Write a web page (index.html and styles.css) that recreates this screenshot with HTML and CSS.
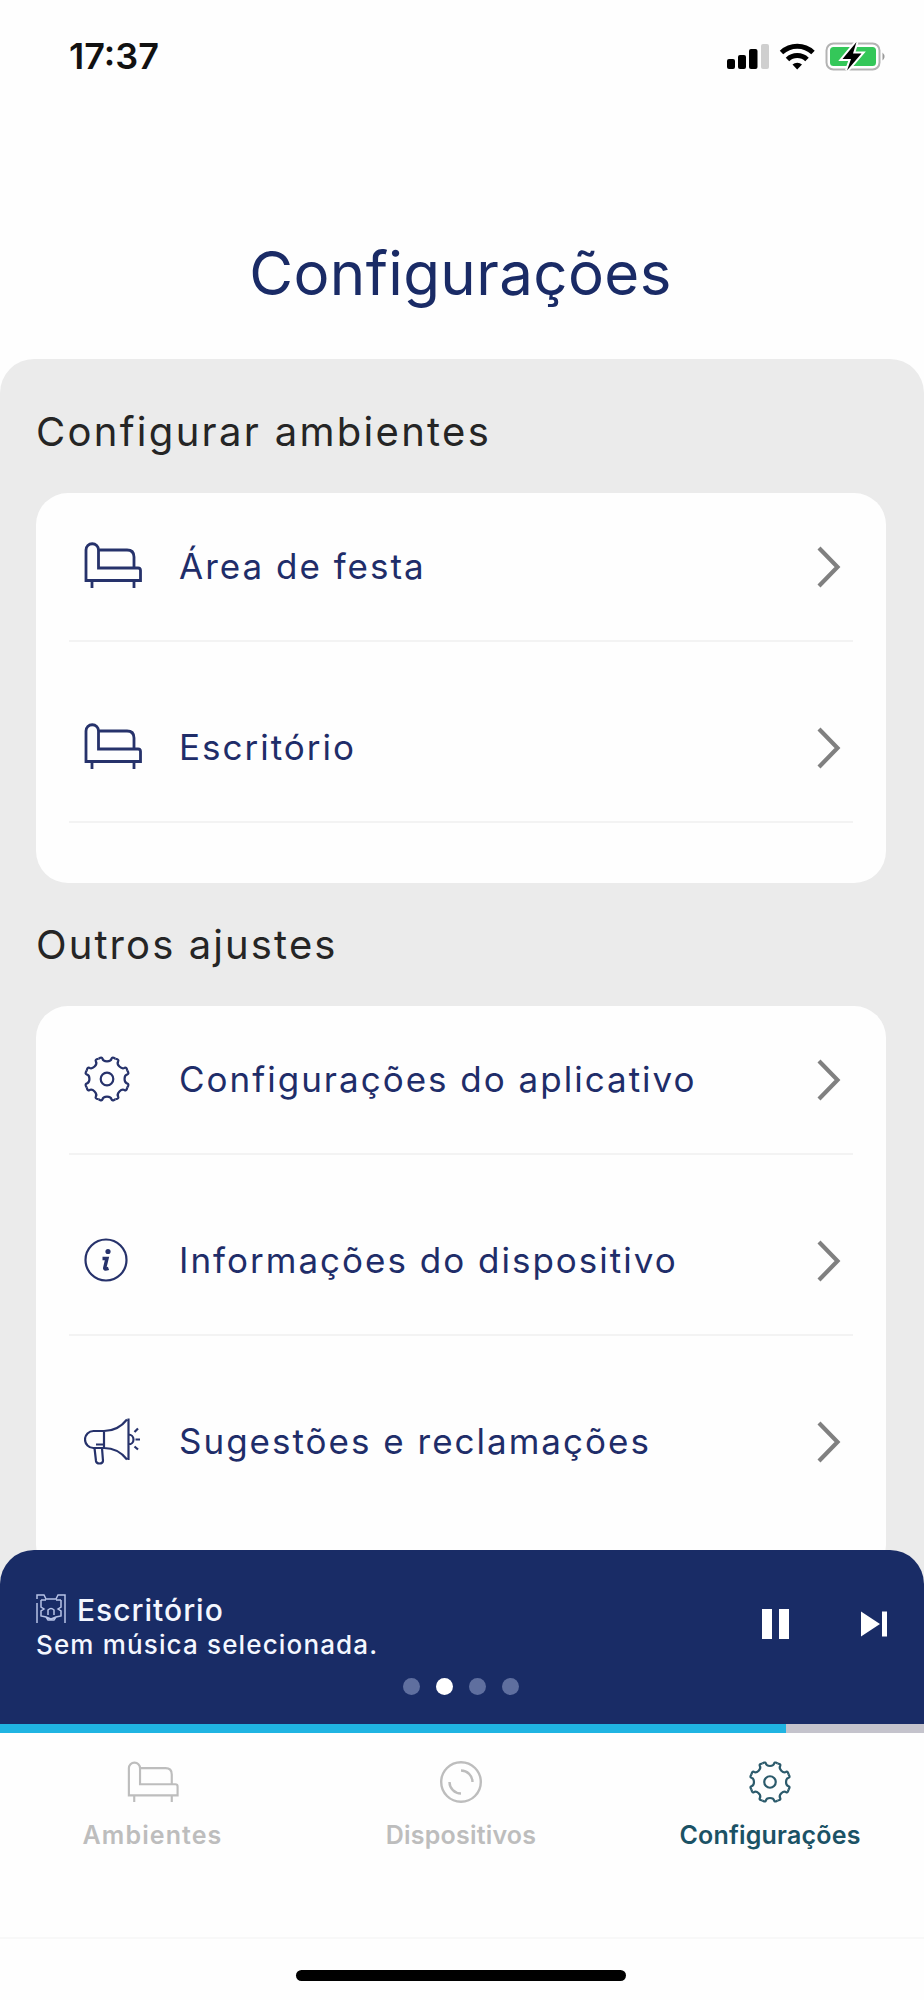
FILE: index.html
```html
<!DOCTYPE html>
<html lang="pt-br">
<head>
    <meta charset="UTF-8">
    <meta name="viewport" content="width=device-width, initial-scale=1.0">
    <title>Configurações</title>
    <link rel="stylesheet" href="styles.css">
</head>
<body>
    <!-- Ícones reutilizados -->
    <svg class="sprite">
        <symbol id="sofa" viewBox="0 0 58 47">
            <path d="M2 38.5V8a6.2 6.2 0 0 1 12.5 0V26H54q2.5 0 2.5 2.5v10zM14.5 8H43q7 0 7 7v11M8 38.5v7.5M50 38.5v7.5"/>
        </symbol>
        <symbol id="engrenagem" viewBox="-23 -23 46 46">
            <g id="dente2"><g id="dente"><path id="d" d="M-8.4-20.3L-6.7-21.2Q-5-21.8-4.6-20.4C-3.8-16.6 3.8-16.6 4.6-20.4Q5-21.8 6.7-21.2L8.4-20.3"/>
            <use href="#d" transform="rotate(45)"/></g>
            <use href="#dente" transform="rotate(90)"/></g>
            <use href="#dente2" transform="rotate(180)"/>
            <circle r="6.3"/>
        </symbol>
        <symbol id="seta" viewBox="0 0 24 42">
            <path d="M2 2l18.5 19L2 40"/>
        </symbol>
    </svg>

    <div class="tela">
        <div class="status">
            <span class="hora">17:37</span>
            <svg class="status-icones" width="160" height="32" viewBox="0 0 160 32">
                <rect x="0" y="18" width="8" height="10" rx="2"/>
                <rect x="11" y="14" width="8" height="14" rx="2"/>
                <rect x="22" y="8" width="8.500" height="20" rx="2"/>
                <rect x="34" y="3" width="8" height="25" rx="2" fill="#cfcfcf"/>
                <g fill="none" stroke="#000" stroke-width="5">
                    <path d="M54.500 11.500a23 23 0 0 1 31.500 0"/>
                    <path d="M60.500 18.500a14 14 0 0 1 19.500 0"/>
                </g>
                <path d="M65.500 23.500a7 7 0 0 1 9.500 0L70.200 28.500z"/>
                <rect x="99.500" y="2.500" width="53" height="26" rx="7" fill="#fff" stroke="#b3b3b3" stroke-width="2"/>
                <rect x="103" y="6" width="46" height="19" rx="3.500" fill="#34c759"/>
                <path d="M155.500 11.500q4 4 0 8z" fill="#999"/>
                <path d="M129.500 1L115.500 18h8.500l-4 11.500L134.500 12.500H126z" stroke="#fff" stroke-width="4" paint-order="stroke"/>
            </svg>
        </div>

        <h1>Configurações</h1>

        <div class="painel">
            <h2>Configurar ambientes</h2>
            <div class="cartao">
                <div class="linha">
                    <div class="icone"><svg class="sofa"><use href="#sofa"/></svg></div>
                    <span>Área de festa</span>
                    <svg class="seta"><use href="#seta"/></svg>
                </div>
                <div class="linha">
                    <div class="icone"><svg class="sofa"><use href="#sofa"/></svg></div>
                    <span>Escritório</span>
                    <svg class="seta"><use href="#seta"/></svg>
                </div>
            </div>

            <h2 class="outros">Outros ajustes</h2>
            <div class="cartao">
                <div class="linha">
                    <div class="icone"><svg class="engrenagem"><use href="#engrenagem"/></svg></div>
                    <span>Configurações do aplicativo</span>
                    <svg class="seta"><use href="#seta"/></svg>
                </div>
                <div class="linha">
                    <div class="icone">
                        <svg class="info" viewBox="0 0 44 44">
                            <circle cx="22" cy="22" r="20.500"/>
                            <circle class="cheio" cx="24" cy="13.500" r="2.600"/>
                            <path class="haste" d="M18.500 20.500h4.500l-2.300 9.500q-.3 1.800 3.800.3"/>
                        </svg>
                    </div>
                    <span>Informações do dispositivo</span>
                    <svg class="seta"><use href="#seta"/></svg>
                </div>
                <div class="linha ultima">
                    <div class="icone">
                        <svg class="megafone" viewBox="0 0 58 48">
                            <path d="M20 14H9.500a8.500 8.500 0 0 0 0 17H20zM20 14q14 0 23-11.500M20 31q14 0 23 11.500M44.500 1.500v41.500M44.500 17.500a5 5 0 0 1 0 10M10.500 31l1.500 13q.4 2.500 3.500 2.500t3.500-2.500l-1-13M12 27.500h8"/>
                            <path d="M50.500 15l3.500-3.500M51.500 22.500h4.500M50.500 29.500l3.500 3"/>
                        </svg>
                    </div>
                    <span>Sugestões e reclamações</span>
                    <svg class="seta"><use href="#seta"/></svg>
                </div>
            </div>
        </div>

        <div class="player">
            <div class="player-topo">
                <div class="faixa">
                    <div class="ambiente">
                        <svg width="30" height="30" viewBox="0 0 30 30">
                            <path d="M1 5V1h7l2 4h10l2-4h7v28M1 9v20M5 6h5M20 6h5M5 6v7l3 2-3 2v5l5 1 2 3h6l2-3 5-1v-5l-3-2 3-2V6M12 21v-5q3-3 6 0v5M10 23l5 2 5-2"/>
                        </svg>
                        <span>Escritório</span>
                    </div>
                    <div class="musica">Sem música selecionada.</div>
                </div>
                <svg class="controles" width="126" height="32" viewBox="0 0 126 32">
                    <path d="M1 1h10v30H1zM18 1h10v30H18zM100 3.500l19 12.500-19 12.500zM121 3.500h5v25h-5z"/>
                </svg>
            </div>
            <div class="pontos">
                <i></i><i class="ativo"></i><i></i><i></i>
            </div>
        </div>
        <div class="progresso"><div></div></div>

        <div class="menu">
            <div class="aba ambientes">
                <svg class="sofa"><use href="#sofa"/></svg>
                <span>Ambientes</span>
            </div>
            <div class="aba">
                <svg class="disco" viewBox="0 0 42 42">
                    <circle cx="21" cy="21" r="19.800"/>
                    <path d="M21 9.500a11.500 11.500 0 0 1 11.500 11.500M21 32.500a11.500 11.500 0 0 1-11.500-11.500"/>
                </svg>
                <span>Dispositivos</span>
            </div>
            <div class="aba atual">
                <svg class="engrenagem"><use href="#engrenagem"/></svg>
                <span>Configurações</span>
            </div>
        </div>
        <div class="rodape"><div class="barra"></div></div>
    </div>
</body>
</html>
```
FILE: styles.css
```css
* {
    box-sizing: border-box;
}

body {
    margin: 0;
    font-family: Inter, "Open Sans", sans-serif;
    background-color: #fefefe;
}

svg {
    display: block;
    flex: none;
}

.sprite {
    display: none;
}

.tela {
    width: 924px;
    height: 2000px;
    display: flex;
    flex-direction: column;
    overflow: hidden;
}

.status {
    height: 112px;
    flex: none;
    padding: 0 37px 0 69px;
    display: flex;
    align-items: center;
    justify-content: space-between;
}

.hora {
    font-size: 36px;
    font-weight: 600;
    color: #111;
}

.status-icones {
    margin-top: 1px;
}

h1 {
    margin: 0;
    height: 247px;
    flex: none;
    padding: 125px 3px 0 0;
    font-size: 60px;
    line-height: 73px;
    font-weight: 400;
    text-align: center;
    letter-spacing: 0.4px;
    color: #1a2b66;
}

/* Área cinza com os cartões */
.painel {
    height: 1225px;
    flex: none;
    padding: 0 38px 0 36px;
    background-color: #ebebeb;
    border-radius: 34px 34px 0 0;
    overflow: hidden;
}

h2 {
    margin: 0;
    height: 134px;
    padding-top: 49px;
    font-size: 40px;
    line-height: 48px;
    font-weight: 400;
    letter-spacing: 2.3px;
    color: #252525;
}

h2.outros {
    height: 123px;
    padding-top: 38px;
    letter-spacing: 2.1px;
}

.cartao {
    background-color: #fefefe;
    border-radius: 32px;
    padding: 0 33px 60px;
}

.linha {
    height: 149px;
    padding: 0 12px 0 15px;
    display: flex;
    align-items: center;
    border-bottom: 2px solid #f3f3f3;
    font-size: 35px;
    letter-spacing: 2px;
    color: #1f2d69;
}

.linha + .linha {
    height: 181px;
    padding-top: 32px;
}

.linha.ultima {
    border-bottom-color: transparent;
}

.icone {
    width: 95px;
    margin-bottom: 2px;
}

.linha span {
    flex: 1;
    margin-bottom: 2px;
}

.linha .icone svg {
    fill: none;
    stroke: #26326b;
    stroke-width: 2.8;
}

.sofa {
    width: 58px;
    height: 47px;
}

.engrenagem {
    width: 46px;
    height: 46px;
}

.linha .icone .engrenagem,
.linha .icone .info,
.linha .icone .megafone {
    stroke-width: 2.2;
}

.info {
    width: 44px;
    height: 44px;
}

.linha .info .cheio {
    fill: #26326b;
    stroke: none;
}

.info .haste {
    stroke-width: 3.4;
}

.megafone {
    width: 58px;
    height: 48px;
}

.seta {
    width: 24px;
    height: 42px;
    fill: none;
    stroke: #808080;
    stroke-width: 4.2;
}

/* Player por cima do fim da lista */
.player {
    height: 174px;
    flex: none;
    margin-top: -34px;
    padding: 41px 37px 0 36px;
    background-color: #192c66;
    border-radius: 34px 34px 0 0;
    color: #f4f7ff;
    font-weight: 500;
}

.player-topo {
    height: 87px;
    display: flex;
    justify-content: space-between;
}

.ambiente {
    height: 38px;
    display: flex;
    align-items: center;
    gap: 11px;
    font-size: 30px;
    letter-spacing: 1px;
}

.ambiente svg {
    margin-bottom: 3px;
    fill: none;
    stroke: #b6c2e6;
    stroke-width: 1.5;
}

.musica {
    font-size: 26px;
    line-height: 32px;
    letter-spacing: 1.15px;
}

.controles {
    margin-top: 17px;
    fill: #fff;
}

.pontos {
    display: flex;
    justify-content: center;
    gap: 16px;
    padding-right: 2px;
}

.pontos i {
    width: 17px;
    height: 17px;
    border-radius: 50%;
    background-color: #5f6f9f;
}

.pontos .ativo {
    background-color: #fff;
}

.progresso {
    height: 9px;
    flex: none;
    background-color: #c4c3cc;
}

.progresso div {
    width: 786px;
    height: 9px;
    background-color: #1fb4e2;
}

.menu {
    height: 206px;
    flex: none;
    padding-top: 28px;
    display: flex;
    justify-content: space-between;
    border-bottom: 2px solid #f8f8f8;
}

.aba {
    width: 308px;
    padding-right: 2px;
    display: flex;
    flex-direction: column;
    align-items: center;
    gap: 16px;
    font-size: 25px;
    line-height: 32px;
    font-weight: 600;
    letter-spacing: 0.2px;
    color: #bdbdbd;
}

.aba.ambientes {
    padding-right: 3px;
    letter-spacing: 1.1px;
}

.aba.atual {
    padding-right: 0;
    color: #1b5265;
}

.aba svg {
    height: 42px;
    fill: none;
    stroke: #bdbdbd;
    stroke-width: 2.4;
}

.aba .sofa {
    width: 52px;
}

.disco {
    width: 42px;
}

.aba .engrenagem {
    width: 42px;
    stroke: #2b5a6b;
}

.rodape {
    height: 61px;
    flex: none;
    padding: 31px 2px 0 0;
}

.barra {
    width: 330px;
    height: 11px;
    margin: 0 auto;
    border-radius: 6px;
    background-color: #000;
}
```
